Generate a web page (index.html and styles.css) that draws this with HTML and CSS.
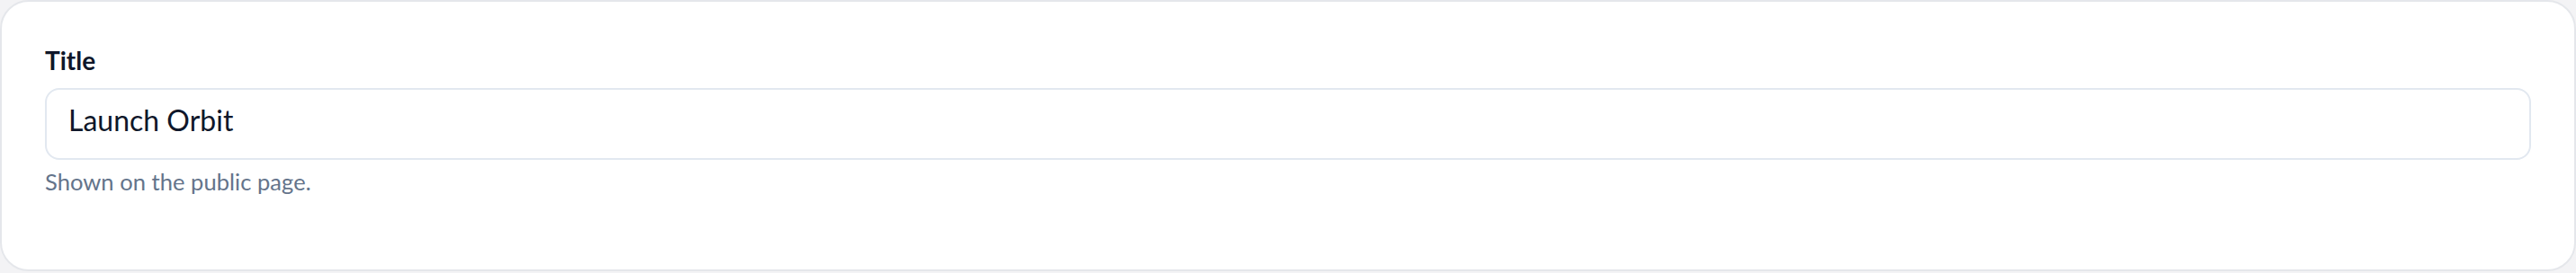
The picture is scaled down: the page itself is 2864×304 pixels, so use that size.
FILE: index.html
```html
<!DOCTYPE html>
<html lang="en">
<head>
<meta charset="utf-8">
<title>Title field</title>
<link rel="stylesheet" href="styles.css">
</head>
<body>
  <div class="card">
    <div class="field">
      <label class="field-label" for="title">Title</label>
      <div class="field-input" id="title">Launch Orbit</div>
      <p class="field-help">Shown on the public page.</p>
    </div>
  </div>
</body>
</html>
```

FILE: styles.css
```css
html, body {
  margin: 0;
  padding: 0;
}
body {
  background: #f3f3f5;
  font-family: "Lato", "Inter", "Noto Sans", sans-serif;
  width: 2864px;
  height: 304px;
}
.card {
  box-sizing: border-box;
  height: 302px;
  background: #ffffff;
  border: 2px solid #e5e7eb;
  border-radius: 32px;
  padding: 48px;
}
.field {
  display: flex;
  flex-direction: column;
}
.field-label {
  font-size: 28px;
  font-weight: 700;
  line-height: 34px;
  color: #0f172a;
  margin-bottom: 14px;
}
.field-input {
  box-sizing: border-box;
  height: 80px;
  border: 2px solid #e2e8f0;
  border-radius: 16px;
  padding: 10px 24px 18px 24px;
  font-size: 32px;
  line-height: 48px;
  color: #0f172a;
  background: #ffffff;
}
.field-help {
  margin: 8px 0 0 0;
  font-size: 25.6px;
  line-height: 32px;
  color: #64748b;
}
```
